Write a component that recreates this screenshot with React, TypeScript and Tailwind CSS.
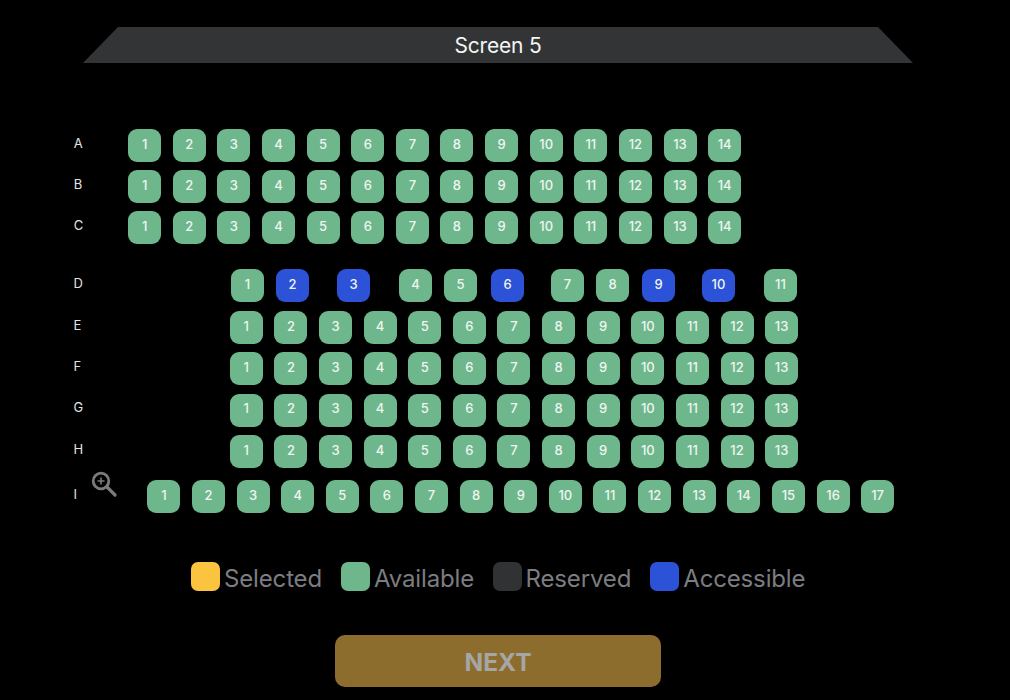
import React from 'react';

type SeatData = { n: number; blue?: boolean; space?: string };

const range = (count: number): SeatData[] => Array.from({ length: count }, (_, i) => ({ n: i + 1 }));

const rowD: SeatData[] = [
  { n: 1 },
  { n: 2, blue: true, space: 'ml-[12px]' },
  { n: 3, blue: true, space: 'ml-[28px]' },
  { n: 4, space: 'ml-[29px]' },
  { n: 5, space: 'ml-[12px]' },
  { n: 6, blue: true, space: 'ml-[14px]' },
  { n: 7, space: 'ml-[27px]' },
  { n: 8, space: 'ml-[12px]' },
  { n: 9, blue: true, space: 'ml-[13px]' },
  { n: 10, blue: true, space: 'ml-[27px]' },
  { n: 11, space: 'ml-[29px]' },
];

const Seat: React.FC<{ seat: SeatData; spaced: boolean }> = ({ seat, spaced }) => (
  <div
    className={`flex h-[33px] w-[33px] shrink-0 items-center justify-center rounded-[9px] pb-[2px] text-[13px] font-medium text-[#eef5f0] ${
      seat.blue ? 'bg-[#2c52d8]' : 'bg-[#6eb78c]'
    } ${seat.space ?? ''} ${spaced ? 'mr-[11.62px]' : ''}`}
  >
    {seat.n}
  </div>
);

const Row: React.FC<{ label: string; seats: SeatData[]; offset: string; className?: string }> = ({
  label,
  seats,
  offset,
  className,
}) => {
  const spaced = seats !== rowD;
  return (
    <div className={`flex h-[33px] items-center ${className ?? ''}`}>
      <div className="w-[128px] pb-[4px] pl-[73.5px] text-[13px] text-[#e4e4e4]">{label}</div>
      <div className={`flex ${offset}`}>
        {seats.map((s) => (
          <Seat key={s.n} seat={s} spaced={spaced} />
        ))}
      </div>
    </div>
  );
};

const Legend: React.FC<{ color: string; label: string; className?: string }> = ({ color, label, className }) => (
  <div className={`flex items-start gap-[4px] ${className ?? ''}`}>
    <div className={`h-[29px] w-[29px] rounded-[7px] ${color}`} />
    <span className="mt-[2px] h-[27px] text-[24px] leading-[29px] tracking-[-0.15px] text-[#7c7c81]">{label}</span>
  </div>
);

export default function App() {
  return (
    <div className="relative h-[700px] w-[1010px] overflow-hidden bg-black pt-[27px] font-['Inter',sans-serif]">
      <div className="ml-[83px] flex h-[36px] w-[830px] items-center justify-center bg-[#333435] pt-[1px] text-[21px] tracking-[-0.2px] text-[#f4f4f4] [clip-path:polygon(35px_0,795px_0,830px_100%,0_100%)]">
        Screen 5
      </div>

      <div className="mt-[66px] flex flex-col">
        <div className="flex flex-col gap-[8.2px] pl-[0.2px]">
          <Row label="A" seats={range(14)} offset="" />
          <Row label="B" seats={range(14)} offset="" />
          <Row label="C" seats={range(14)} offset="" />
        </div>
        <div className="mt-[25px] flex flex-col gap-[8.4px]">
          <Row label="D" seats={rowD} offset="ml-[103px]" />
          <Row label="E" seats={range(13)} offset="ml-[101.8px]" />
          <Row label="F" seats={range(13)} offset="ml-[101.8px]" />
          <Row label="G" seats={range(13)} offset="ml-[101.8px]" />
          <Row label="H" seats={range(13)} offset="ml-[101.8px]" />
        </div>
        <Row label="I" seats={range(17)} offset="ml-[19.4px]" className="mt-[12px]" />
      </div>

      <svg className="absolute left-[90px] top-[470px]" width="28" height="28" viewBox="0 0 28 28" fill="none" stroke="#7b7b7b">
        <circle cx="11" cy="11" r="7.8" strokeWidth="2.8" />
        <path d="M17 17l8 8" strokeWidth="3.2" strokeLinecap="round" />
        <path d="M7.5 11h7M11 7.5v7" strokeWidth="1.6" />
      </svg>

      <div className="ml-[191px] mt-[49px] flex">
        <Legend color="bg-[#fbc43f]" label="Selected" />
        <Legend color="bg-[#6eb78c]" label="Available" className="ml-[19px]" />
        <Legend color="bg-[#303233]" label="Reserved" className="ml-[18.5px]" />
        <Legend color="bg-[#2c52d8]" label="Accessible" className="ml-[19px]" />
      </div>

      <button className="ml-[335px] mt-[44px] flex h-[52px] w-[326px] items-center justify-center rounded-[10px] bg-[#8c6d2d] pt-[2px] text-[24.5px] font-bold text-[#a6a6a6]">
        NEXT
      </button>
    </div>
  );
}
